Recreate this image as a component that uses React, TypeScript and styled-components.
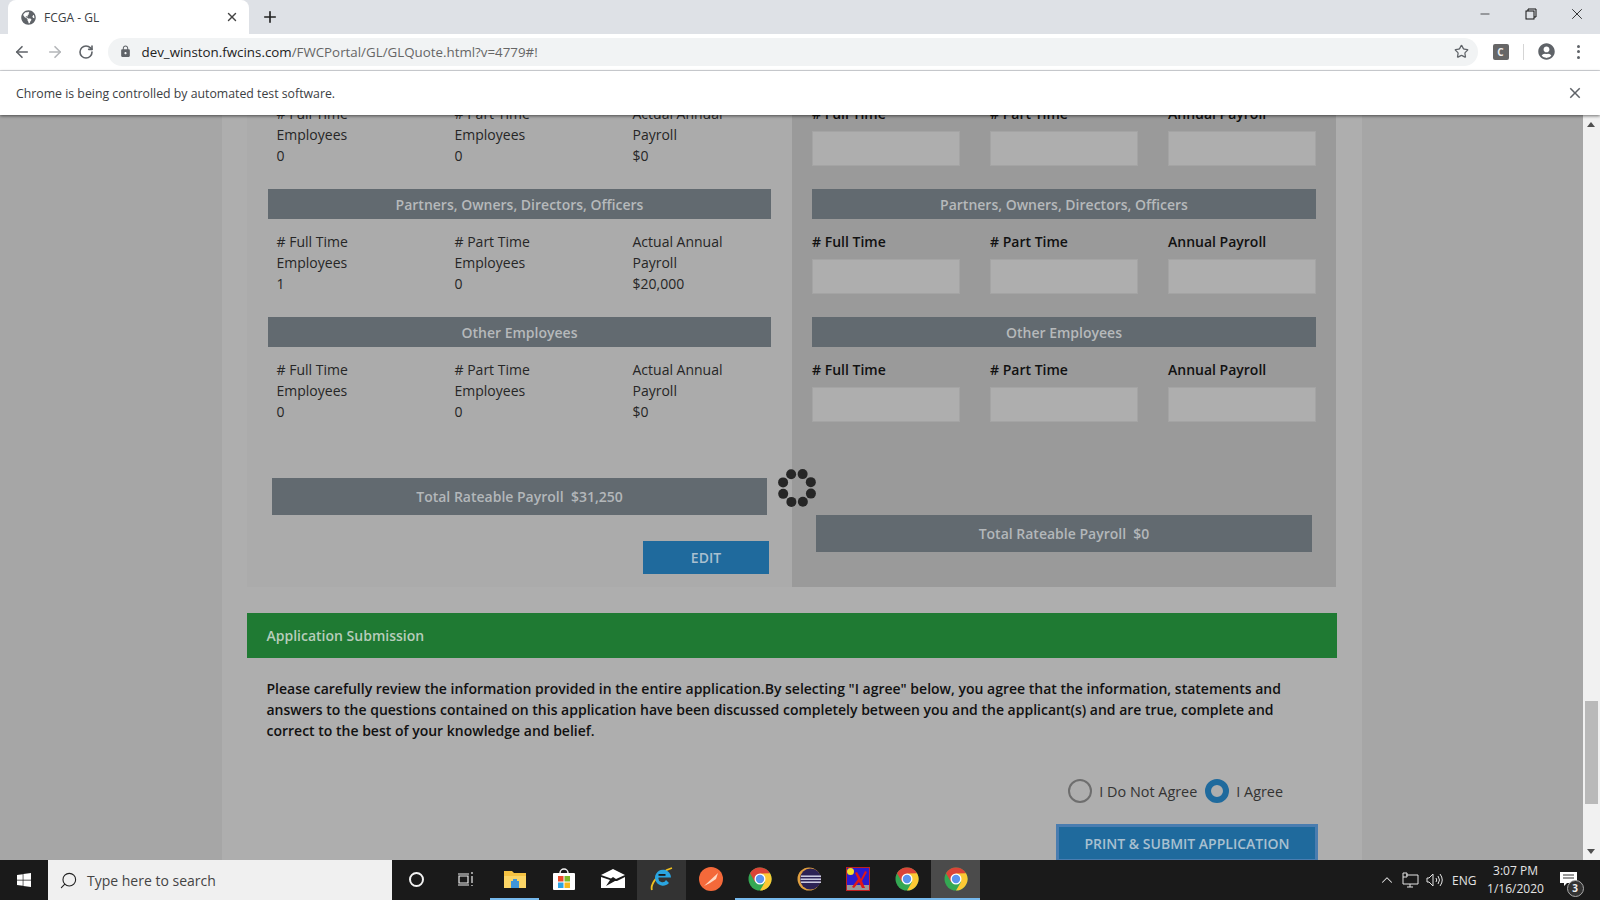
import React from 'react';
import styled, {createGlobalStyle} from 'styled-components';
import {ArrowLeft, ArrowRight, RotateCw, Star, Plus, X, Minus, Search, ChevronUp} from 'lucide-react';
import {FaGlobeAmericas, FaUserCircle, FaWindows} from 'react-icons/fa';
import {MdLock, MdClose} from 'react-icons/md';

const GlobalStyle = createGlobalStyle`
    html, body {
        margin: 0;
        padding: 0;
        height: 100%;
        overflow: hidden;
        font-family: "Open Sans", "Liberation Sans", sans-serif;
    }
    * { box-sizing: border-box; }
`;

const Page = styled.div`
    display: flex;
    flex-direction: column;
    width: 1600px;
    height: 900px;
    overflow: hidden;
`;

/* browser chrome */
const TabStrip = styled.div`
    display: flex;
    align-items: flex-end;
    height: 34px;
    background: #dee1e6;
    flex-shrink: 0;
`;

const Tab = styled.div`
    display: flex;
    align-items: center;
    width: 241px;
    height: 34px;
    margin-left: 8px;
    padding: 0 10px 0 13px;
    background: #fff;
    border-radius: 8px 8px 0 0;
    color: #3c4043;
    font-size: 12px;
`;

const TabTitle = styled.span`
    flex: 1;
    margin-left: 8px;
`;

const NewTab = styled.div`
    display: flex;
    align-items: center;
    margin: 0 0 8px 12px;
    color: #222;
`;

const WindowButtons = styled.div`
    display: flex;
    align-items: center;
    gap: 31px;
    margin: 0 14px 6px auto;
    height: 28px;
    color: #111;
`;

const MinimizeIcon = styled(Minus)`
    margin-right: 2px;
`;

const RestoreIcon = styled.svg`
    width: 12px;
    height: 12px;
`;

const Toolbar = styled.div`
    display: flex;
    align-items: center;
    height: 37px;
    padding: 0 10px 1px 13px;
    background: #fff;
    border-bottom: 1px solid #dadce0;
    flex-shrink: 0;
`;

const NavButton = styled.div<{$muted?: boolean}>`
    display: flex;
    width: 32.5px;
    color: ${p => (p.$muted ? '#b4b6b9' : '#5f6368')};
`;

const Omnibox = styled.div`
    display: flex;
    align-items: center;
    width: 1370px;
    height: 28px;
    margin-left: -3px;
    padding: 0 9px 0 11px;
    background: #f1f3f4;
    border-radius: 14px;
    font-size: 13.33px;
    color: #666;
`;

const UrlHost = styled.span`
    margin-left: 10px;
    color: #222;
`;

const OmniStar = styled.div`
    display: flex;
    margin-left: auto;
    color: #5f6368;
`;

const ExtensionBadge = styled.div`
    display: flex;
    align-items: center;
    justify-content: center;
    width: 16px;
    height: 16px;
    margin-left: 15px;
    background: #666;
    border-radius: 2px;
    color: #eee;
    font-size: 10px;
    font-weight: 700;
`;

const ToolbarDivider = styled.div`
    width: 1px;
    height: 16px;
    margin: 0 14px 0 14px;
    background: #d5d5d5;
`;

const ProfileIcon = styled.div`
    display: flex;
    color: #5f6368;
`;

const MenuDots = styled.div`
    display: flex;
    flex-direction: column;
    gap: 2.5px;
    margin-left: 22px;

    i {
        width: 3px;
        height: 3px;
        border-radius: 50%;
        background: #5f6368;
    }
`;

const InfoBar = styled.div`
    position: relative;
    z-index: 2;
    display: flex;
    align-items: center;
    justify-content: space-between;
    height: 44px;
    padding: 0 16px;
    background: #fff;
    box-shadow: 0 1px 3px rgba(0, 0, 0, 0.55);
    color: #3c4043;
    font-size: 12.3px;
    flex-shrink: 0;
`;

const InfoClose = styled.div`
    display: flex;
    color: #5f6368;
`;

/* page under the modal backdrop */
const Viewport = styled.div`
    display: flex;
    flex: 1;
    min-height: 0;
    background: #a6a6a6;
`;

const ScrollArea = styled.div`
    flex: 1;
    overflow: hidden;
`;

const Sheet = styled.div`
    width: 1140px;
    margin: -12px 0 0 222px;
    padding: 0 25px;
    background: #aeaeae;
    height: 800px;
`;

const Compare = styled.div`
    display: grid;
    grid-template-columns: 545px 544px;
    height: 484px;
`;

const LeftPane = styled.div`
    padding: 0 21px;
    background: #ababab;
`;

const RightPane = styled.div`
    padding: 0 20px;
    background: #9a9a9a;
`;

const BlockBar = styled.div`
    display: flex;
    align-items: center;
    justify-content: center;
    height: 30px;
    margin: 23px 0 12px;
    background: #626a70;
    color: #b6b9bb;
    font-size: 14px;
    font-weight: 600;
`;

const Columns = styled.div`
    display: grid;
    grid-template-columns: repeat(3, 178px);
    padding-left: 8.5px;
    color: #262626;
    font-size: 14px;
    line-height: 21px;
`;

const FormColumns = styled.div`
    display: grid;
    grid-template-columns: repeat(3, 148px);
    column-gap: 30px;
`;

const FieldLabel = styled.div`
    margin-bottom: 7px;
    color: #111;
    font-size: 14px;
    font-weight: 600;
    line-height: 21px;
`;

const FieldBox = styled.div`
    height: 35px;
    background: #aeaeae;
    border: 1px solid #a4a4a4;
`;

const TotalBar = styled.div<{$top: number}>`
    display: flex;
    align-items: center;
    justify-content: center;
    height: 37px;
    margin: ${p => p.$top}px 4px 0;
    background: #626a70;
    color: #b3b7ba;
    font-size: 14px;
    font-weight: 600;
    white-space: pre;
`;

const EditRow = styled.div`
    display: flex;
    justify-content: flex-end;
    margin: 26px 2px 0 0;
`;

const EditButton = styled.div`
    display: flex;
    align-items: center;
    justify-content: center;
    width: 126px;
    height: 33px;
    background: #1f6a9d;
    color: #a9c0d0;
    font-size: 14px;
    font-weight: 600;
`;

const Submission = styled.div`
    margin-top: 26px;
`;

const GreenHead = styled.div`
    display: flex;
    align-items: center;
    height: 45px;
    padding-left: 19.5px;
    background: #1f7a33;
    color: #b7cdbb;
    font-size: 14px;
    font-weight: 600;
`;

const Legal = styled.p`
    margin: 20px 0 0;
    padding: 0 19.5px;
    color: #111;
    font-size: 14px;
    font-weight: 600;
    line-height: 21px;
`;

const RadioRow = styled.div`
    display: flex;
    align-items: center;
    justify-content: flex-end;
    height: 24px;
    margin: 38px 54px 0 0;
    color: #333;
    font-size: 14.4px;
`;

const Radio = styled.span<{$on?: boolean}>`
    width: 24px;
    height: 24px;
    margin: 0 7px 0 ${p => (p.$on ? 8 : 0)}px;
    border-radius: 50%;
    border: ${p => (p.$on ? '6.5px solid #1f6a9d' : '2px solid #6e6e6e')};
    background: #aeaeae;
`;

const SubmitRow = styled.div`
    display: flex;
    justify-content: flex-end;
    margin: 21px 19px 0 0;
`;

const SubmitButton = styled.div`
    display: flex;
    align-items: center;
    justify-content: center;
    width: 262px;
    height: 38px;
    background: #1f6a9d;
    border: 3px solid #4a7db0;
    color: #a9c0d0;
    font-size: 14px;
    font-weight: 600;
`;

const Spinner = styled.svg`
    position: absolute;
    left: 776px;
    top: 467px;
    width: 42px;
    height: 42px;
`;

const ScrollTrack = styled.div`
    position: relative;
    width: 17px;
    background: #f1f1f1;
    flex-shrink: 0;
`;

const ScrollThumb = styled.div`
    position: absolute;
    left: 2px;
    right: 2px;
    top: 586px;
    height: 103px;
    background: #b9b9b9;
`;

const ScrollArrow = styled.div<{$down?: boolean}>`
    position: absolute;
    left: 4px;
    ${p => (p.$down ? 'bottom: 6px;' : 'top: 7px;')}
    border-left: 4.5px solid transparent;
    border-right: 4.5px solid transparent;
    ${p => (p.$down ? 'border-top: 5px solid #505050;' : 'border-bottom: 5px solid #505050;')}
`;

/* taskbar */
const Taskbar = styled.div`
    position: relative;
    z-index: 3;
    display: flex;
    align-items: center;
    height: 40px;
    background: #1a1a1a;
    color: #e8e8e8;
    flex-shrink: 0;
`;

const StartButton = styled.div`
    display: flex;
    align-items: center;
    justify-content: center;
    width: 48px;
    height: 40px;
    color: #fff;
    flex-shrink: 0;
`;

const SearchBox = styled.div`
    display: flex;
    align-items: center;
    gap: 9px;
    width: 344px;
    height: 40px;
    padding-left: 11px;
    background: #f0f0f0;
    color: #444;
    font-size: 14px;
    flex-shrink: 0;
`;

const FlippedSearch = styled(Search)`
    transform: scaleX(-1);
`;

const TaskSlot = styled.div<{$active?: boolean; $hover?: boolean; $line?: boolean}>`
    position: relative;
    display: flex;
    align-items: center;
    justify-content: center;
    width: 49px;
    height: 40px;
    flex-shrink: 0;
    background: ${p => (p.$active ? '#4b4b4b' : p.$hover ? '#333' : 'transparent')};
    border-bottom: ${p => (p.$line ? '2px solid #76b9ed' : '2px solid transparent')};
`;

const CortanaRing = styled.div`
    width: 15px;
    height: 15px;
    border: 2px solid #f2f2f2;
    border-radius: 50%;
`;

const Tray = styled.div`
    display: flex;
    align-items: center;
    margin-left: auto;
    height: 40px;
    color: #e4e4e4;
`;

const TrayIcon = styled.div<{$gap: number}>`
    display: flex;
    margin-left: ${p => p.$gap}px;
`;

const TrayText = styled.div`
    margin-left: 9px;
    font-size: 12px;
`;

const Clock = styled.div`
    width: 78px;
    text-align: center;
    font-size: 12px;
    line-height: 18px;
`;

const Notify = styled.div`
    position: relative;
    width: 45.5px;
    height: 40px;
`;

const NotifyBubble = styled.svg`
    position: absolute;
    left: 5px;
    top: 12px;
`;

const NotifyCount = styled.div`
    position: absolute;
    left: 12px;
    top: 20px;
    width: 17px;
    height: 17px;
    border: 1px solid #aaa;
    border-radius: 50%;
    background: #333;
    color: #eee;
    font-size: 10px;
    font-weight: 700;
    line-height: 15px;
    text-align: center;
`;

const ChromeLogo = () => (
    <svg width="24" height="24" viewBox="0 0 24 24">
        <circle cx="12" cy="12" r="11.500" fill="#34a853"/>
        <path d="M12 .5A11.500 11.500 0 0 1 22 6.250L12 12 7 15 2 6.250A11.500 11.500 0 0 1 12 .5z" fill="#db4437"/>
        <path d="M22 6.250A11.500 11.500 0 0 1 12 23.500L17 15 12 6.500z" fill="#fcc934"/>
        <circle cx="12" cy="12" r="5.500" fill="#fff"/>
        <circle cx="12" cy="12" r="4.200" fill="#5b93ee"/>
    </svg>
);

const FolderIcon = () => (
    <svg width="24" height="22" viewBox="0 0 24 22">
        <path d="M1 3h8l2 2h12v15H1z" fill="#f5c242"/>
        <path d="M1 8h22v12H1z" fill="#fbd566"/>
        <rect x="8" y="13" width="8" height="7" fill="#3f95d8"/>
        <rect x="10" y="11" width="4" height="3" fill="#3f95d8"/>
    </svg>
);

const StoreIcon = () => (
    <svg width="24" height="24" viewBox="0 0 24 24">
        <path d="M8 6a4 4 0 0 1 8 0" fill="none" stroke="#f2f2f2" strokeWidth="1.500"/>
        <rect x="1" y="6" width="22" height="17" rx="1" fill="#fff"/>
        <rect x="6" y="9" width="5.500" height="5.500" fill="#ea4a2a"/>
        <rect x="12.500" y="9" width="5.500" height="5.500" fill="#7db928"/>
        <rect x="6" y="15.500" width="5.500" height="5.500" fill="#2da4e6"/>
        <rect x="12.500" y="15.500" width="5.500" height="5.500" fill="#f8b81c"/>
    </svg>
);

const MailIcon = () => (
    <svg width="24" height="20" viewBox="0 0 24 20">
        <path d="M0 6L12 0l12 6-9 4-3-2-2 1.500z" fill="#fff"/>
        <path d="M0 8l9 3L5 17l9-5 2 0 8-4v11H0z" fill="#fff"/>
    </svg>
);

const IeIcon = () => (
    <svg width="24" height="24" viewBox="0 0 24 24">
        <path d="M2 23C0 18 8 5 22 1" fill="none" stroke="#f0c020" strokeWidth="1.800"/>
        <path d="M19 16a8 8 0 1 1 2-5.500H8.500a4 4 0 0 0 7.500 2.500z" fill="#2aa5e0" fillRule="evenodd"/>
        <rect x="8.500" y="7" width="7" height="1.800" fill="#1a1a1a"/>
    </svg>
);

const SwiftIcon = () => (
    <svg width="24" height="24" viewBox="0 0 24 24">
        <circle cx="12" cy="12" r="12" fill="#f4693a"/>
        <path d="M5 19L19 6l-2 6-6 4z" fill="#ffd9c4"/>
    </svg>
);

const EclipseIcon = () => (
    <svg width="24" height="24" viewBox="0 0 24 24">
        <circle cx="12" cy="12" r="11.500" fill="#e0a040"/>
        <circle cx="13.500" cy="12" r="10.500" fill="#2c2255"/>
        <rect x="4" y="8.500" width="20" height="1.400" fill="#dcdcf0"/>
        <rect x="3.500" y="11.500" width="20.500" height="1.400" fill="#dcdcf0"/>
        <rect x="4" y="14.500" width="20" height="1.400" fill="#dcdcf0"/>
    </svg>
);

const XAppIcon = () => (
    <svg width="24" height="24" viewBox="0 0 24 24">
        <rect x="0.500" y="0.500" width="23" height="23" fill="#2a1bd0" stroke="#c02020"/>
        <circle cx="4.500" cy="4.500" r="3.500" fill="#f2e030"/>
        <rect x="1" y="18" width="22" height="5" fill="#999"/>
        <path d="M11 5l4 7 4-8 2 1-5 9 3 7-3 0-3-6-5 6-2-1 6-8-3-6z" fill="#e01818"/>
    </svg>
);

const Dots = [0, 45, 90, 135, 180, 225, 270, 315];

const App = () => {
    const dataBlock = (a: string, b: string, c: string) => (
        <Columns>
            <div># Full Time<br/>Employees<br/>{a}</div>
            <div># Part Time<br/>Employees<br/>{b}</div>
            <div>Actual Annual<br/>Payroll<br/>{c}</div>
        </Columns>
    );

    const formBlock = (
        <FormColumns>
            <div><FieldLabel># Full Time</FieldLabel><FieldBox/></div>
            <div><FieldLabel># Part Time</FieldLabel><FieldBox/></div>
            <div><FieldLabel>Annual Payroll</FieldLabel><FieldBox/></div>
        </FormColumns>
    );

    return <Page>
        <GlobalStyle/>
        <TabStrip>
            <Tab>
                <FaGlobeAmericas size={15} color="#5f6368"/>
                <TabTitle>FCGA - GL</TabTitle>
                <X size={14} strokeWidth={2.4} color="#444"/>
            </Tab>
            <NewTab><Plus size={18} strokeWidth={2.2}/></NewTab>
            <WindowButtons>
                <MinimizeIcon size={14} strokeWidth={1.2}/>
                <RestoreIcon viewBox="0 0 12 12" fill="none" stroke="#111">
                    <path d="M3 3V1h8v8H9"/>
                    <rect x="1" y="3" width="8" height="8"/>
                </RestoreIcon>
                <X size={18} strokeWidth={1.1}/>
            </WindowButtons>
        </TabStrip>
        <Toolbar>
            <NavButton><ArrowLeft size={18} strokeWidth={2.2}/></NavButton>
            <NavButton $muted><ArrowRight size={18} strokeWidth={2.2}/></NavButton>
            <NavButton><RotateCw size={16} strokeWidth={2.4}/></NavButton>
            <Omnibox>
                <MdLock size={13} color="#5f6368"/>
                <UrlHost>dev_winston.fwcins.com</UrlHost>/FWCPortal/GL/GLQuote.html?v=4779#!
                <OmniStar><Star size={15} strokeWidth={2}/></OmniStar>
            </Omnibox>
            <ExtensionBadge>C</ExtensionBadge>
            <ToolbarDivider/>
            <ProfileIcon><FaUserCircle size={17}/></ProfileIcon>
            <MenuDots><i/><i/><i/></MenuDots>
        </Toolbar>
        <InfoBar>
            Chrome is being controlled by automated test software.
            <InfoClose><MdClose size={18}/></InfoClose>
        </InfoBar>
        <Viewport>
            <ScrollArea>
                <Sheet>
                    <Compare>
                        <LeftPane>
                            {dataBlock('0', '0', '$0')}
                            <BlockBar>Partners, Owners, Directors, Officers</BlockBar>
                            {dataBlock('1', '0', '$20,000')}
                            <BlockBar>Other Employees</BlockBar>
                            {dataBlock('0', '0', '$0')}
                            <TotalBar $top={56}>Total Rateable Payroll  $31,250</TotalBar>
                            <EditRow><EditButton>EDIT</EditButton></EditRow>
                        </LeftPane>
                        <RightPane>
                            {formBlock}
                            <BlockBar>Partners, Owners, Directors, Officers</BlockBar>
                            {formBlock}
                            <BlockBar>Other Employees</BlockBar>
                            {formBlock}
                            <TotalBar $top={93}>Total Rateable Payroll  $0</TotalBar>
                        </RightPane>
                    </Compare>
                    <Submission>
                        <GreenHead>Application Submission</GreenHead>
                        <Legal>
                            Please carefully review the information provided in the entire application.By selecting "I agree" below, you agree that the information, statements and<br/>
                            answers to the questions contained on this application have been discussed completely between you and the applicant(s) and are true, complete and<br/>
                            correct to the best of your knowledge and belief.
                        </Legal>
                        <RadioRow>
                            <Radio/>I Do Not Agree
                            <Radio $on/>I Agree
                        </RadioRow>
                        <SubmitRow><SubmitButton>PRINT &amp; SUBMIT APPLICATION</SubmitButton></SubmitRow>
                    </Submission>
                </Sheet>
            </ScrollArea>
            <ScrollTrack>
                <ScrollArrow/>
                <ScrollThumb/>
                <ScrollArrow $down/>
            </ScrollTrack>
        </Viewport>
        <Spinner viewBox="0 0 42 42">
            {Dots.map(d => (
                <circle
                    key={d}
                    cx={21 + 15 * Math.cos(((d + 22) * Math.PI) / 180)}
                    cy={21 + 15 * Math.sin(((d + 22) * Math.PI) / 180)}
                    r="5"
                    fill="#262626"
                />
            ))}
        </Spinner>
        <Taskbar>
            <StartButton><FaWindows size={16}/></StartButton>
            <SearchBox>
                <FlippedSearch size={19} strokeWidth={1.4} color="#222"/>
                Type here to search
            </SearchBox>
            <TaskSlot><CortanaRing/></TaskSlot>
            <TaskSlot>
                <svg width="17" height="16" viewBox="0 0 17 16" fill="none" stroke="#eee" strokeWidth="1.200">
                    <path d="M1 3h11M1 14h11M2 5h9v7H2zM15 1v2M15 5v7M15 14v1"/>
                </svg>
            </TaskSlot>
            <TaskSlot $line><FolderIcon/></TaskSlot>
            <TaskSlot><StoreIcon/></TaskSlot>
            <TaskSlot><MailIcon/></TaskSlot>
            <TaskSlot $hover><IeIcon/></TaskSlot>
            <TaskSlot><SwiftIcon/></TaskSlot>
            <TaskSlot $line><ChromeLogo/></TaskSlot>
            <TaskSlot $line><EclipseIcon/></TaskSlot>
            <TaskSlot $line><XAppIcon/></TaskSlot>
            <TaskSlot $line><ChromeLogo/></TaskSlot>
            <TaskSlot $active $line><ChromeLogo/></TaskSlot>
            <Tray>
                <ChevronUp size={18} strokeWidth={1.4}/>
                <TrayIcon $gap={6}>
                    <svg width="17" height="16" viewBox="0 0 17 16" fill="none" stroke="#e4e4e4">
                        <path d="M4 3h12v9H1V1h4v4H1M8 12v3M5 15h6"/>
                    </svg>
                </TrayIcon>
                <TrayIcon $gap={7}>
                    <svg width="17" height="16" viewBox="0 0 17 16" fill="none" stroke="#e4e4e4">
                        <path d="M1 6h2l4-4v12l-4-4H1zM10 6q1.500 2 0 4M12 4q3 4 0 8M14 2q4.500 6 0 12"/>
                    </svg>
                </TrayIcon>
                <TrayText>ENG</TrayText>
                <Clock>3:07 PM<br/>1/16/2020</Clock>
                <Notify>
                    <NotifyBubble width="17" height="15" viewBox="0 0 17 15">
                        <path d="M0 0h17v11H7l-3 3v-3H0z" fill="#fff"/>
                        <path d="M3 3h11M3 6h11" stroke="#333"/>
                    </NotifyBubble>
                    <NotifyCount>3</NotifyCount>
                </Notify>
            </Tray>
        </Taskbar>
    </Page>;
};

export default App;
